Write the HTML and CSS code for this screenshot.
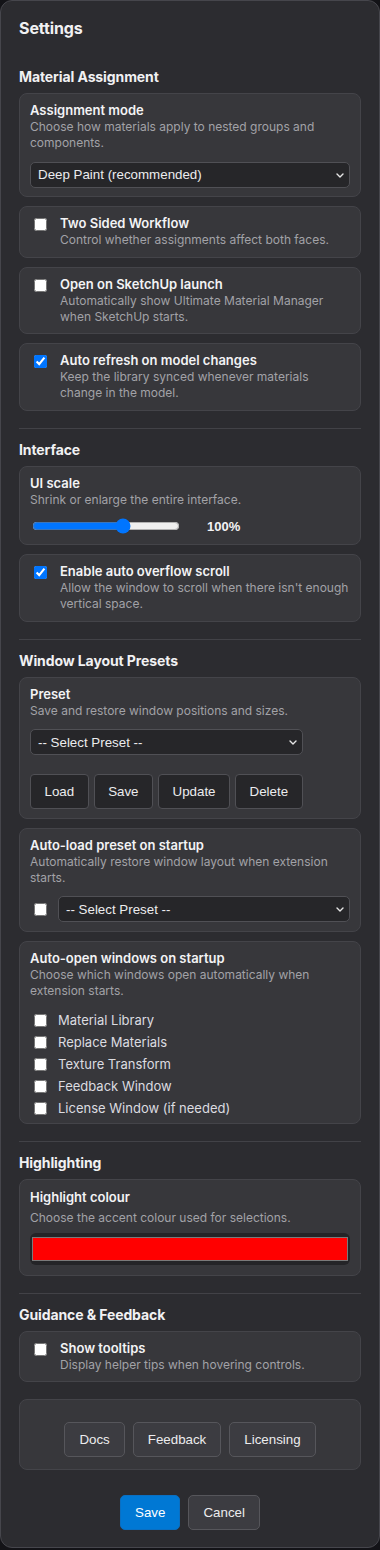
FILE: index.html
```html
<!DOCTYPE html>
<html lang="en">
<head>
<meta charset="utf-8">
<title>Settings</title>
<link rel="stylesheet" href="styles.css">
</head>
<body>
<div class="panel">
  <h1 class="panel__title">Settings</h1>

  <section class="section">
    <h2 class="section__heading">Material Assignment</h2>
    <div class="stack">
      <div class="card">
        <div class="card__title">Assignment mode</div>
        <div class="card__desc">Choose how materials apply to nested groups and<br>components.</div>
        <div class="select-wrap select-wrap--full">
          <select class="select"><option>Deep Paint (recommended)</option></select>
          <svg class="select-wrap__chev" viewBox="0 0 8 5" width="8" height="5"><path d="M1 1l3 3 3-3" fill="none" stroke="#e6e6e6" stroke-width="1.4" stroke-linecap="round" stroke-linejoin="round"/></svg>
        </div>
      </div>

      <label class="card card--check">
        <input type="checkbox" class="check">
        <span class="card__body">
          <span class="card__title">Two Sided Workflow</span>
          <span class="card__desc">Control whether assignments affect both faces.</span>
        </span>
      </label>

      <label class="card card--check">
        <input type="checkbox" class="check">
        <span class="card__body">
          <span class="card__title">Open on SketchUp launch</span>
          <span class="card__desc">Automatically show Ultimate Material Manager<br>when SketchUp starts.</span>
        </span>
      </label>

      <label class="card card--check">
        <input type="checkbox" class="check" checked>
        <span class="card__body">
          <span class="card__title">Auto refresh on model changes</span>
          <span class="card__desc">Keep the library synced whenever materials<br>change in the model.</span>
        </span>
      </label>
    </div>
  </section>

  <section class="section">
    <h2 class="section__heading">Interface</h2>
    <div class="stack">
      <div class="card">
        <div class="card__title">UI scale</div>
        <div class="card__desc">Shrink or enlarge the entire interface.</div>
        <div class="scale-row">
          <input type="range" class="range" min="50" max="130" value="100">
          <span class="scale-row__value">100%</span>
        </div>
      </div>

      <label class="card card--check">
        <input type="checkbox" class="check" checked>
        <span class="card__body">
          <span class="card__title">Enable auto overflow scroll</span>
          <span class="card__desc">Allow the window to scroll when there isn't enough<br>vertical space.</span>
        </span>
      </label>
    </div>
  </section>

  <section class="section">
    <h2 class="section__heading">Window Layout Presets</h2>
    <div class="stack">
      <div class="card">
        <div class="card__title">Preset</div>
        <div class="card__desc">Save and restore window positions and sizes.</div>
        <div class="preset-controls">
          <div class="select-wrap">
            <select class="select"><option>-- Select Preset --</option></select>
            <svg class="select-wrap__chev" viewBox="0 0 8 5" width="8" height="5"><path d="M1 1l3 3 3-3" fill="none" stroke="#e6e6e6" stroke-width="1.4" stroke-linecap="round" stroke-linejoin="round"/></svg>
          </div>
          <div class="btn-row">
            <button class="btn">Load</button>
            <button class="btn">Save</button>
            <button class="btn">Update</button>
            <button class="btn">Delete</button>
          </div>
        </div>
      </div>

      <div class="card">
        <div class="card__title">Auto-load preset on startup</div>
        <div class="card__desc">Automatically restore window layout when extension<br>starts.</div>
        <div class="autoload-row">
          <input type="checkbox" class="check">
          <div class="select-wrap select-wrap--grow">
            <select class="select"><option>-- Select Preset --</option></select>
            <svg class="select-wrap__chev" viewBox="0 0 8 5" width="8" height="5"><path d="M1 1l3 3 3-3" fill="none" stroke="#e6e6e6" stroke-width="1.4" stroke-linecap="round" stroke-linejoin="round"/></svg>
          </div>
        </div>
      </div>

      <div class="card card--list">
        <div class="card__title">Auto-open windows on startup</div>
        <div class="card__desc">Choose which windows open automatically when<br>extension starts.</div>
        <div class="check-list">
          <label class="check-list__item"><input type="checkbox" class="check">Material Library</label>
          <label class="check-list__item"><input type="checkbox" class="check">Replace Materials</label>
          <label class="check-list__item"><input type="checkbox" class="check">Texture Transform</label>
          <label class="check-list__item"><input type="checkbox" class="check">Feedback Window</label>
          <label class="check-list__item"><input type="checkbox" class="check">License Window (if needed)</label>
        </div>
      </div>
    </div>
  </section>

  <section class="section">
    <h2 class="section__heading">Highlighting</h2>
    <div class="stack">
      <div class="card card--colour">
        <div class="card__title">Highlight colour</div>
        <div class="card__desc">Choose the accent colour used for selections.</div>
        <input type="color" class="colour" value="#ff0000">
      </div>
    </div>
  </section>

  <section class="section section--last">
    <h2 class="section__heading">Guidance &amp; Feedback</h2>
    <label class="card card--check">
      <input type="checkbox" class="check">
      <span class="card__body">
        <span class="card__title">Show tooltips</span>
        <span class="card__desc">Display helper tips when hovering controls.</span>
      </span>
    </label>
    <div class="card card--links">
      <div class="link-row">
        <button class="btn btn--soft">Docs</button>
        <button class="btn btn--soft">Feedback</button>
        <button class="btn btn--soft">Licensing</button>
      </div>
    </div>
  </section>

  <div class="footer">
    <button class="btn btn--primary">Save</button>
    <button class="btn btn--soft">Cancel</button>
  </div>
</div>
</body>
</html>
```

FILE: styles.css
```css
* {
  box-sizing: border-box;
}

html,
body {
  margin: 0;
  background: #131317;
}

body {
  font-family: Inter, "Noto Sans", "Liberation Sans", sans-serif;
  color: #f1f1f3;
}

.panel {
  width: 380px;
  background: #2c2c30;
  border: 1px solid #46464c;
  border-radius: 12px;
  padding: 17px 18px 17px;
}

.panel__title {
  margin: 0 0 18px;
  font-size: 16px;
  line-height: 20px;
  font-weight: 700;
  letter-spacing: -0.1px;
}

.section {
  padding: 12px 0 17px;
  border-bottom: 1px solid #424247;
}

.section--last {
  border-bottom: none;
  padding-bottom: 0;
}

.section__heading {
  margin: 0 0 7px;
  font-size: 14px;
  line-height: 18px;
  font-weight: 700;
  letter-spacing: -0.1px;
}

.stack {
  display: flex;
  flex-direction: column;
  gap: 9px;
}

.card {
  display: block;
  background: #37373b;
  border: 1px solid #444449;
  border-radius: 8px;
  padding: 8px 10px 8.5px;
}

.card__title {
  display: block;
  font-size: 13px;
  line-height: 16px;
  font-weight: 600;
  margin-bottom: 1px;
  color: #f3f3f5;
}

.card__desc {
  display: block;
  font-size: 12px;
  line-height: 16px;
  color: #a2a2a7;
}

.card--check {
  display: flex;
  align-items: flex-start;
  gap: 10px;
}

.card__body {
  display: block;
  flex: 1;
  min-width: 0;
}

.check {
  flex: none;
  width: 13px;
  height: 13px;
  margin: 3px 3px 3px 4px;
}

/* selects */
.select-wrap {
  position: relative;
  display: block;
}

.select-wrap--full {
  margin-top: 10.5px;
}

.select-wrap--grow {
  flex: 1;
}

.select {
  display: block;
  width: 100%;
  height: 26px;
  appearance: none;
  -webkit-appearance: none;
  margin: 0;
  padding: 0 24px 0 7px;
  background: #262629;
  border: 1px solid #505055;
  border-radius: 5px;
  color: #ececee;
  font: 13.33px "Liberation Sans", Arial, sans-serif;
}

.select-wrap__chev {
  position: absolute;
  right: 6px;
  top: 11px;
  pointer-events: none;
}

/* UI scale */
.scale-row {
  display: flex;
  align-items: center;
  height: 19px;
  margin-top: 9px;
  gap: 27px;
}

.range {
  width: 148px;
  margin: 0 0 0 2px;
}

.scale-row__value {
  font: 700 13px "Liberation Sans", Arial, sans-serif;
  color: #f3f3f5;
}

/* presets */
.preset-controls {
  display: grid;
  width: max-content;
  row-gap: 19px;
  margin-top: 10.5px;
}

.btn-row {
  display: flex;
  gap: 5px;
}

.btn {
  height: 35px;
  padding: 0 14px;
  margin: 0;
  background: #262629;
  border: 1px solid #505055;
  border-radius: 4px;
  color: #ececee;
  font: 13.33px "Liberation Sans", Arial, sans-serif;
}

.btn-row .btn {
  padding: 0 13.5px;
}

.btn--soft {
  background: #3c3c41;
  border-color: #56565b;
  border-radius: 5px;
}

.btn--primary {
  background: #0078d4;
  border-color: #0a6fc2;
  border-radius: 5px;
  color: #ffffff;
}

.autoload-row {
  display: flex;
  align-items: center;
  gap: 8px;
  margin-top: 10.5px;
}

.autoload-row .check {
  margin: 0 3px 0 4px;
}

/* auto-open list */
.card--list {
  padding-bottom: 3.5px;
}

.check-list {
  margin-top: 10.5px;
}

.check-list__item {
  display: flex;
  align-items: center;
  height: 22px;
  gap: 8px;
  font-size: 13px;
  color: #dcdce0;
}

.check-list__item .check {
  margin: 0 3px 0 4px;
}

/* colour */
.card--colour {
  padding-bottom: 9.5px;
}

.card--colour .card__title {
  margin-top: 1.5px;
  margin-bottom: 5px;
}

.colour {
  display: block;
  width: 100%;
  height: 32px;
  margin: 7px 0 0;
  padding: 4px 2px;
  background: #242427;
  border: none;
  border-radius: 6px;
  -webkit-appearance: none;
  appearance: none;
}

.colour::-webkit-color-swatch-wrapper {
  padding: 0;
}

.colour::-webkit-color-swatch {
  border: 1px solid #7a7a7a;
  border-radius: 0;
}

/* links */
.card--links {
  margin-top: 17px;
  padding: 12px 10px;
}

.link-row {
  display: flex;
  justify-content: center;
  gap: 8px;
  margin-top: 10px;
}

.footer {
  display: flex;
  justify-content: center;
  gap: 8px;
  padding-top: 25px;
}
```
